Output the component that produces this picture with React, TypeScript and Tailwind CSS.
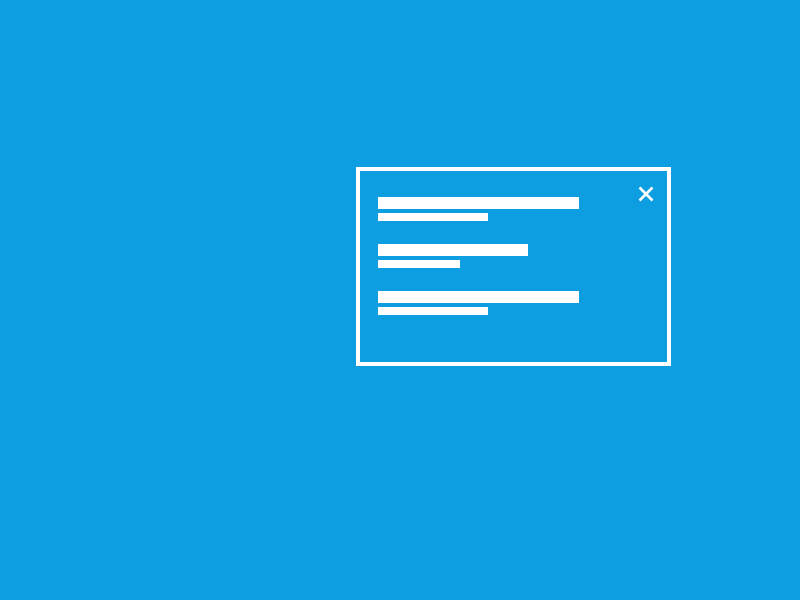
import React from "react";

interface Line {
	big: number;
	small: number;
}

const lines: Line[] = [
	{ big: 201, small: 110 },
	{ big: 150, small: 82 },
	{ big: 201, small: 110 },
];

function CloseIcon() {
	return (
		<svg width="16" height="16" viewBox="0 0 16 16" className="block">
			<path d="M1.5 1.5 L14.5 14.5 M14.5 1.5 L1.5 14.5" stroke="#ffffff" strokeWidth="2.6" fill="none" />
		</svg>
	);
}

export default function App() {
	return (
		<div className="w-[800px] h-[600px] bg-[#0c9ee1] pt-[167px] pl-[356px] overflow-hidden">
			<div className="w-[315px] h-[199px] border-4 border-white flex justify-between pl-[18px] pt-[26px] pr-[13px]">
				<div className="flex flex-col gap-[23px]">
					{lines.map((line, i) => (
						<div key={i} className="flex flex-col gap-1">
							<div className="h-3 bg-white" style={{ width: line.big }} />
							<div className="h-2 bg-white" style={{ width: line.small }} />
						</div>
					))}
				</div>
				<button className="-mt-[11px] h-4 w-4 cursor-pointer">
					<CloseIcon />
				</button>
			</div>
		</div>
	);
}
